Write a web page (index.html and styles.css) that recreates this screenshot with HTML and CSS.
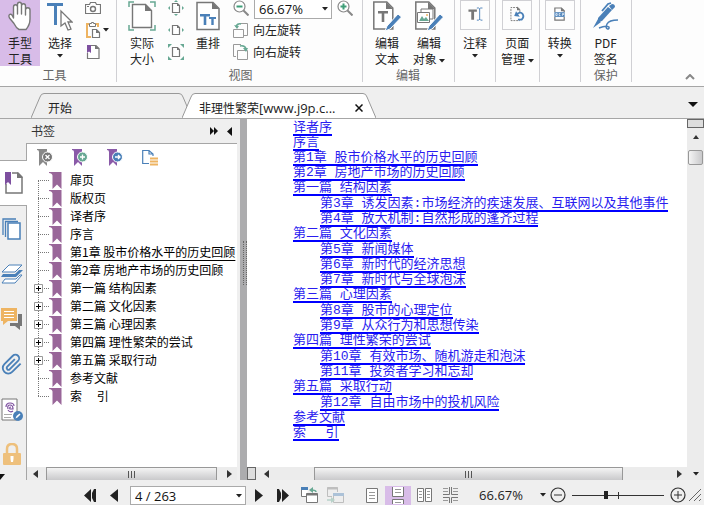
FILE: index.html
```
<!DOCTYPE html>
<html lang="zh-CN">
<head>
    <meta charset="UTF-8">
    <meta name="viewport" content="width=device-width, initial-scale=1.0">
    <title>非理性繁荣</title>
    <link rel="stylesheet" href="styles.css">
</head>
<body>
    <!-- Shared icons -->
    <svg class="sprite" aria-hidden="true">
        <symbol id="caret" viewBox="0 0 6 4"><path d="M0 0h6L3 3.6z" fill="#222"/></symbol>
        <symbol id="mark" viewBox="0 0 13 17"><path d="M0 0h12.5v17L8 12.5 3.5 17V3.5Q3 1 0 1z" fill="#996699"/></symbol>
        <symbol id="plus-box" viewBox="0 0 9 9"><path d="M.5.5h8v8h-8z" fill="#fff" stroke="#999"/><path d="M2 4.5h5M4.5 2v5" stroke="#000"/></symbol>
        <symbol id="arrow-left" viewBox="0 0 5 8"><path d="M5 0v8L0 4z" fill="#333"/></symbol>
        <symbol id="arrow-right" viewBox="0 0 5 8"><path d="M0 0v8l5-4z" fill="#333"/></symbol>
        <symbol id="small-page" viewBox="0 0 16 16"><path d="M4.5 3.5h5l2 2v7h-7z" fill="#fff" stroke="#777" stroke-width="1.2"/><path d="M9 3v3h3z" fill="#777"/></symbol>
    </svg>

    <header class="ribbon">
        <section class="group">
            <div class="group-items">
                <button class="big-btn hand active">
                    <svg width="24" height="34" viewBox="0 0 24 34"><path d="M5.500 18V7c0-3 4-3 4 0v7-9.500c0-3 4-3 4 0V14 6c0-3 4-3 4 0v9-5c0-3 4.500-3 4.500 0v9c0 4-1 7-4 10.500h-7c-3-1.500-4-4-5-6L1.500 18C0 15 2 13 4 15z" fill="#fff" stroke="#777" stroke-width="1.4" stroke-linejoin="round"/></svg>
                    <span>手型<br>工具</span>
                </button>
                <button class="big-btn">
                    <svg width="26" height="34" viewBox="0 0 26 34"><path d="M0 3h16v3h-6v19H7V6H0z" fill="#4a80b8"/><path d="M14 11v15l4-3 3 7 3-1-3-7h4z" fill="#fff" stroke="#777" stroke-width="1.3"/></svg>
                    <span>选择</span>
                    <svg class="caret"><use href="#caret"/></svg>
                </button>
                <div class="small-col">
                    <button class="icon-btn" aria-label="快照"><svg width="16" height="16" viewBox="0 0 16 16"><path d="M.5 4.5h4l1-2h5l1 2h4v9H.5z" fill="#fff" stroke="#777" stroke-width="1.2"/><circle cx="8" cy="9" r="2.5" fill="none" stroke="#777" stroke-width="1.4"/><path d="M2 6.5h2" stroke="#777"/></svg></button>
                    <button class="icon-btn" aria-label="剪贴板"><svg width="16" height="16" viewBox="0 0 16 16"><path d="M4 2H2v13h4M11 2h2v3" fill="none" stroke="#eeb462" stroke-width="2"/><path d="M4.5 1.5h2v-1h2v1h2v3h-6z" fill="#fff" stroke="#777"/><path d="M7.5 7.5h4l3 3v5h-7z" fill="#fff" stroke="#777" stroke-width="1.2"/><path d="M11 7v4h4z" fill="#777"/></svg><svg class="caret"><use href="#caret"/></svg></button>
                    <button class="icon-btn" aria-label="书签"><svg width="16" height="16" viewBox="0 0 16 16"><path d="M6 1.5h5l3 3v10H2.5V9" fill="#fff" stroke="#777" stroke-width="1.2"/><path d="M10 1v4h4.5z" fill="#777"/><path d="M2 1h4v8L4 7.5 2 9z" fill="#7d4f9f"/></svg></button>
                </div>
            </div>
            <h2>工具</h2>
        </section>

        <section class="group view">
            <div class="group-items">
                <button class="big-btn">
                    <svg width="28" height="34" viewBox="0 0 28 34"><path d="M1 7V2h5M22 2h5v5M27 25v5h-5M6 30H1v-5" fill="none" stroke="#67a893" stroke-width="1.5"/><path d="M4.5 4.5h13l6 6v17h-19z" fill="#fff" stroke="#777" stroke-width="1.4"/><path d="M17 4v7h7z" fill="#777"/></svg>
                    <span>实际<br>大小</span>
                </button>
                <div class="small-col">
                    <button class="icon-btn" aria-label="适合页面"><svg width="16" height="16" viewBox="0 0 16 16"><use href="#small-page"/><path d="M8 0l2 2H6zM8 16l2-2H6zM0 8l2-2v4zM16 8l-2-2v4z" fill="#67a893"/></svg></button>
                    <button class="icon-btn" aria-label="适合宽度"><svg width="16" height="16" viewBox="0 0 16 16"><use href="#small-page"/><path d="M0 8l2-2v4zM16 8l-2-2v4z" fill="#67a893"/></svg></button>
                    <button class="icon-btn" aria-label="适合视区"><svg width="16" height="16" viewBox="0 0 16 16"><use href="#small-page"/><path d="M0 0h4L0 4zM16 0v4l-4-4zM0 16v-4l4 4zM16 16h-4l4-4z" fill="#67a893"/></svg></button>
                </div>
                <button class="big-btn">
                    <svg width="24" height="34" viewBox="0 0 24 34"><path d="M1 2.5h16l6 6v21H1z" fill="#fff" stroke="#777" stroke-width="1.5"/><path d="M16 2v7h7z" fill="#777"/><path d="M4 14h10v2.5h-3.700V25H7.700v-8.500H4zM13 17h7v2h-2.300v6h-2.400v-6H13z" fill="#4a80b8"/></svg>
                    <span>重排</span>
                </button>
                <div class="small-col zoom-col">
                    <div class="zoom-row">
                        <button class="icon-btn" aria-label="缩小"><svg width="16" height="16" viewBox="0 0 16 16"><circle cx="6.5" cy="6.5" r="5.5" fill="#fff" stroke="#888" stroke-width="1.2"/><path d="M3.5 6.5h6" stroke="#3f9e78" stroke-width="2"/><path d="M10.5 10.5l5 5" stroke="#888" stroke-width="2"/></svg></button>
                        <label class="combo zoom-combo"><select aria-label="缩放"><option>66.67%</option></select><svg class="caret"><use href="#caret"/></svg></label>
                        <button class="icon-btn" aria-label="放大"><svg width="16" height="16" viewBox="0 0 16 16"><circle cx="6.5" cy="6.5" r="5.5" fill="#fff" stroke="#888" stroke-width="1.2"/><path d="M3.5 6.5h6M6.5 3.5v6" stroke="#3f9e78" stroke-width="2"/><path d="M10.5 10.5l5 5" stroke="#888" stroke-width="2"/></svg></button>
                    </div>
                    <button class="text-btn"><svg width="16" height="16" viewBox="0 0 16 16"><path d="M7 1.5h7.5v12H11M.5 7.5h10v8H.5z" fill="none" stroke="#999"/><path d="M3 5q1-4 5-3" fill="none" stroke="#67a893" stroke-width="1.5"/><path d="M1 3l3 4 2-3z" fill="#67a893"/></svg>向左旋转</button>
                    <button class="text-btn"><svg width="16" height="16" viewBox="0 0 16 16"><path d="M3 12.5H.5V.5H8M4.5 6.5h10v9h-10z" fill="none" stroke="#999"/><path d="M7 2q5-1 6 3" fill="none" stroke="#67a893" stroke-width="1.5"/><path d="M10 4l3 4 2-4z" fill="#67a893"/></svg>向右旋转</button>
                </div>
            </div>
            <h2>视图</h2>
        </section>

        <section class="group edit">
            <div class="group-items">
                <button class="big-btn">
                    <svg width="28" height="34" viewBox="0 0 28 34"><path d="M.8 2h13l6 6v21H.8z" fill="#fff" stroke="#777" stroke-width="1.5"/><path d="M13 2v7h7z" fill="#777"/><path d="M5 11h10v2.500h-3.700V22H8.700v-8.500H5z" fill="#777"/><path d="M12 31l2-5 11-12 3.500 3-11.500 12z" fill="#4a80b8" stroke="#fff"/></svg>
                    <span>编辑<br>文本</span>
                </button>
                <button class="big-btn">
                    <svg width="28" height="34" viewBox="0 0 28 34"><path d="M.8 2h13l6 6v21H.8z" fill="#fff" stroke="#777" stroke-width="1.5"/><path d="M13 2v7h7z" fill="#777"/><path d="M6 12V9h12v10h-3M2.5 12.500h12v10h-12z" fill="#fff" stroke="#777"/><path d="M4 21l3-5 2 3 2-2 3 4z" fill="#67a893"/><circle cx="12" cy="15" r="1" fill="#eeb462"/><path d="M12 31l2-5 11-12 3.500 3-11.500 12z" fill="#4a80b8" stroke="#fff"/></svg>
                    <span>编辑<br>对象 <svg class="caret"><use href="#caret"/></svg></span>
                </button>
            </div>
            <h2>编辑</h2>
        </section>

        <section class="group narrow">
            <button class="big-btn boxed">
                <svg width="30" height="30" viewBox="0 0 30 30"><path d="M8 9h9v2.5h-3V20h-3v-8.500H8z" fill="#777"/><path d="M17 7.5h2l1 1 1-1h2M17 20.5h2l1-1 1 1h2M20 8v12" fill="none" stroke="#4a80b8"/></svg>
                <span>注释</span>
                <svg class="caret"><use href="#caret"/></svg>
            </button>
        </section>
        <section class="group narrow">
            <button class="big-btn boxed">
                <svg width="30" height="30" viewBox="0 0 30 30"><path d="M18 12V9l-2-2H8.500v14H18" fill="none" stroke="#777" stroke-dasharray="2 1"/><path d="M15 6v4h4z" fill="#777"/><path d="M15 14q4-3 6 0t-1 6h-4" fill="none" stroke="#4a80b8" stroke-width="2"/><path d="M12 16l6 1-4-6z" fill="#4a80b8"/></svg>
                <span>页面<br>管理 <svg class="caret"><use href="#caret"/></svg></span>
            </button>
        </section>
        <section class="group narrow">
            <button class="big-btn boxed">
                <svg width="30" height="30" viewBox="0 0 30 30"><path d="M9.500 12V7.500h7l3 3V12M9.500 17v3.500h10V17" fill="none" stroke="#777" stroke-width="1.3"/><path d="M16 7v4h4z" fill="#777"/><path d="M9 12h11v5H9z" fill="#4a80b8"/><path d="M10.500 13.500h1.500v2h-1.500zM15.500 13.500h-1.500v2h1.500M17.500 16v-2.500h1.500v1h-1" fill="none" stroke="#fff" stroke-width=".8"/></svg>
                <span>转换</span>
                <svg class="caret"><use href="#caret"/></svg>
            </button>
        </section>
        <section class="group protect">
            <button class="big-btn">
                <svg width="26" height="34" viewBox="0 0 26 34"><path d="M5 18L15 7l4 3L9 21l-4 1z" fill="#4a80b8"/><path d="M16 6l3-2q3 0 3 3l-3 3zM5 19l-5 9 8-6z" fill="#4a80b8"/><path d="M9 11l6-7 3-1" fill="none" stroke="#4a80b8" stroke-width="1.8"/><path d="M6 27q7-3 10-1c1 3-5 3-2-3q2-4 11-4" transform="translate(0 1)" fill="none" stroke="#4a80b8" stroke-width="1.5"/></svg>
                <span>PDF<br>签名</span>
            </button>
            <h2>保护</h2>
        </section>
        <button class="collapse" aria-label="折叠功能区"><svg width="10" height="6" viewBox="0 0 10 6"><path d="M1 5l4-4 4 4" fill="none" stroke="#888" stroke-width="2"/></svg></button>
    </header>

    <nav class="tabs">
        <a class="tab" href="#start">
            <svg width="13" height="25" viewBox="0 0 13 25"><path d="M0 25L9 4Q10 .5 13 .5" fill="#efefef" stroke="#999"/></svg>
            <span class="tab-body">开始</span>
            <svg width="13" height="25" viewBox="0 0 13 25"><path d="M0 .5Q3 .5 4 4l9 21" fill="#efefef" stroke="#999"/></svg>
        </a>
        <div class="tab current">
            <svg width="13" height="25" viewBox="0 0 13 25"><path d="M0 25L9 4Q10 .5 13 .5V25" fill="#fff"/><path d="M0 25L9 4Q10 .5 13 .5" fill="none" stroke="#999"/></svg>
            <span class="tab-body"><a href="#doc">非理性繁荣<span class="latin">[www.j9p.c...</span></a>
                <button aria-label="关闭"><svg width="8" height="8" viewBox="0 0 8 8"><path d="M.5.5l7 7M7.5.5l-7 7" stroke="#111" stroke-width="1.5"/></svg></button></span>
            <svg width="13" height="25" viewBox="0 0 13 25"><path d="M0 25V.5Q3 .5 4 4l9 21" fill="#fff"/><path d="M0 .5Q3 .5 4 4l9 21" fill="none" stroke="#999"/></svg>
        </div>
        <button class="tab-list" aria-label="标签列表"><svg width="10" height="6" viewBox="0 0 10 6"><path d="M0 0h10L5 5z" fill="#111"/></svg></button>
    </nav>

    <main>
        <aside class="rail">
            <div class="rail-top"></div>
            <button class="rail-current" aria-label="书签面板"><svg width="18" height="22" viewBox="0 0 18 22"><path d="M7 1h6l4 4v16H1V12" fill="#fff" stroke="#777" stroke-width="1.5"/><path d="M12 0v6h6z" fill="#777"/><path d="M0 0h6v13l-3-3-3 3z" fill="#7d4f9f"/></svg></button>
            <div class="rail-rest">
                <button aria-label="页面"><svg width="20" height="22" viewBox="0 0 20 22"><path d="M1 17V1h13M3.5 19V3.5H16" fill="none" stroke="#4a80b8" stroke-width="1.3"/><path d="M6 5h12v16H6z" fill="#fff" stroke="#4a80b8" stroke-width="1.5"/></svg></button>
                <button aria-label="图层"><svg width="22" height="20" viewBox="0 0 22 20"><path d="M8 1h13l-7 7H1z" fill="#fff" stroke="#4a80b8"/><path d="M18 6h4l-7 7H0l2-3h12z" fill="#4a80b8"/><path d="M19 11h2l-7 8H1l3-4h11z" fill="#fff" stroke="#4a80b8"/></svg></button>
                <button aria-label="注释"><svg width="22" height="22" viewBox="0 0 22 22"><path d="M17 6h4v12h-2v4l-5-4H9v-3h8z" fill="#777"/><path d="M0 0h16v13H7l-5 4v-4H0z" fill="#eeb462"/><path d="M3 3.5h10M3 6.5h10M3 9.5h10" stroke="#fff"/></svg></button>
                <button aria-label="附件"><svg width="22" height="22" viewBox="0 0 24 24"><path d="M21.4 11l-9.200 9.200a6 6 0 0 1-8.500-8.500l9.200-9.200a4 4 0 0 1 5.700 5.700l-9.200 9.200a2 2 0 0 1-2.800-2.800l8.500-8.500" transform="translate(0 .5)" fill="none" stroke="#4a80b8" stroke-width="2"/></svg></button>
                <button aria-label="签名"><svg width="22" height="24" viewBox="0 0 22 24"><path d="M1 1h15v21H1z" fill="#fff" stroke="#777"/><path d="M5 9q0-4 4-4 4 0 4 3M7 11q-1-4 2-4t3 4H9q-1-2 1-2M7 12q2 3 5 1" fill="none" stroke="#7d4f9f" stroke-width="1.2"/><path d="M3 16.5h8M3 19.5h7" stroke="#aaa"/><circle cx="17" cy="18" r="5" fill="#4a80b8"/><path d="M14.500 20.500l1-2.500 3-2.500 1 1-3 3z" fill="#fff"/></svg></button>
                <button aria-label="安全"><svg width="18" height="22" viewBox="0 0 18 22"><path d="M4 11V6q0-5 5-5t5 5v5" fill="none" stroke="#eec07c" stroke-width="2.5"/><rect y="10" width="18" height="12" rx="1" fill="#eec07c"/><path d="M7.500 13h3v3l-.5 3H8l-.5-3z" fill="#fff"/></svg></button>
                <svg class="rail-more" width="5" height="6" viewBox="0 0 5 6"><path d="M0 0h5L0 6z" fill="#111"/></svg>
            </div>
        </aside>

        <section class="panel">
            <div class="panel-head">
                <h3>书签</h3>
                <button aria-label="展开"><svg width="8" height="8" viewBox="0 0 8 8"><path d="M0 0l4 4-4 4zM4 0l4 4-4 4z" fill="#111"/></svg></button>
                <button aria-label="收起"><svg width="5" height="9" viewBox="0 0 5 9"><path d="M5 0v9L0 4.5z" fill="#111"/></svg></button>
            </div>
            <div class="panel-body">
                <div class="panel-tools">
                    <button aria-label="删除书签"><svg width="16" height="17" viewBox="0 0 16 17"><path d="M0 0h10v17l-4-4-4 4V3q0-2-2-2z" fill="#888"/><circle cx="10.5" cy="8" r="5" fill="#777" stroke="#fff"/><path d="M8.5 6l4 4M12.5 6l-4 4" stroke="#fff" stroke-width="1.3"/></svg></button>
                    <button aria-label="新建书签"><svg width="16" height="17" viewBox="0 0 16 17"><path d="M0 0h10v17l-4-4-4 4V3q0-2-2-2z" fill="#8a5aa8"/><circle cx="10.5" cy="8" r="5" fill="#67a893" stroke="#fff"/><path d="M8 8h5M10.500 5.500v5" stroke="#fff" stroke-width="1.3"/></svg></button>
                    <button aria-label="转到书签"><svg width="16" height="17" viewBox="0 0 16 17"><path d="M0 0h10v17l-4-4-4 4V3q0-2-2-2z" fill="#8a5aa8"/><circle cx="10.5" cy="8" r="5" fill="#4a80b8" stroke="#fff"/><path d="M8 8h4.500M11 6l2 2-2 2" fill="none" stroke="#fff" stroke-width="1.3"/></svg></button>
                    <button aria-label="书签选项"><svg width="16" height="17" viewBox="0 0 16 17"><path d="M7 14.500H.7v-13H7l4 3.500v2M7 1v4h4" fill="none" stroke="#4a80b8" stroke-width="1.2"/><path d="M8 9.500h8M8 12.500h8M8 15.500h8" stroke="#eeb462" stroke-width="2"/></svg></button>
                </div>
                <ul class="tree">
                    <li><svg class="mark"><use href="#mark"/></svg><a href="#p1">扉页</a></li>
                    <li><svg class="mark"><use href="#mark"/></svg><a href="#p2">版权页</a></li>
                    <li><svg class="mark"><use href="#mark"/></svg><a href="#p3">译者序</a></li>
                    <li><svg class="mark"><use href="#mark"/></svg><a href="#p4">序言</a></li>
                    <li><svg class="mark"><use href="#mark"/></svg><a class="selected" href="#p5">第1章 股市价格水平的历史回顾</a></li>
                    <li><svg class="mark"><use href="#mark"/></svg><a href="#p6">第2章 房地产市场的历史回顾</a></li>
                    <li><button aria-label="展开第一篇"><svg><use href="#plus-box"/></svg></button><svg class="mark"><use href="#mark"/></svg><a href="#p7">第一篇 结构因素</a></li>
                    <li><button aria-label="展开第二篇"><svg><use href="#plus-box"/></svg></button><svg class="mark"><use href="#mark"/></svg><a href="#p8">第二篇 文化因素</a></li>
                    <li><button aria-label="展开第三篇"><svg><use href="#plus-box"/></svg></button><svg class="mark"><use href="#mark"/></svg><a href="#p9">第三篇 心理因素</a></li>
                    <li><button aria-label="展开第四篇"><svg><use href="#plus-box"/></svg></button><svg class="mark"><use href="#mark"/></svg><a href="#p10">第四篇 理性繁荣的尝试</a></li>
                    <li><button aria-label="展开第五篇"><svg><use href="#plus-box"/></svg></button><svg class="mark"><use href="#mark"/></svg><a href="#p11">第五篇 采取行动</a></li>
                    <li><svg class="mark"><use href="#mark"/></svg><a href="#p12">参考文献</a></li>
                    <li><svg class="mark"><use href="#mark"/></svg><a href="#p13">索&emsp;&nbsp;引</a></li>
                </ul>
                <div class="hscroll">
                    <svg width="5" height="8"><use href="#arrow-left"/></svg>
                    <div class="thumb"><i></i><i></i><i></i></div>
                    <svg width="5" height="8"><use href="#arrow-right"/></svg>
                </div>
            </div>
        </section>

        <div class="splitter"><i></i></div>

        <section class="document">
            <div class="page-col">
                <article class="page">
                    <ul class="toc">
                        <li><a href="#p3">译者序</a></li>
                        <li><a href="#p4">序言</a></li>
                        <li><a href="#p5">第1章 股市价格水平的历史回顾</a></li>
                        <li><a href="#p6">第2章 房地产市场的历史回顾</a></li>
                        <li><a href="#p7">第一篇 结构因素</a>
                            <ul>
                                <li><a href="#c3">第3章 诱发因素:市场经济的疾速发展、互联网以及其他事件</a></li>
                                <li><a href="#c4">第4章 放大机制:自然形成的蓬齐过程</a></li>
                            </ul>
                        </li>
                        <li><a href="#p8">第二篇 文化因素</a>
                            <ul>
                                <li><a href="#c5">第5章 新闻媒体</a></li>
                                <li><a href="#c6">第6章 新时代的经济思想</a></li>
                                <li><a href="#c7">第7章 新时代与全球泡沫</a></li>
                            </ul>
                        </li>
                        <li><a href="#p9">第三篇 心理因素</a>
                            <ul>
                                <li><a href="#c8">第8章 股市的心理定位</a></li>
                                <li><a href="#c9">第9章 从众行为和思想传染</a></li>
                            </ul>
                        </li>
                        <li><a href="#p10">第四篇 理性繁荣的尝试</a>
                            <ul>
                                <li><a href="#c10">第10章 有效市场、随机游走和泡沫</a></li>
                                <li><a href="#c11">第11章 投资者学习和忘却</a></li>
                            </ul>
                        </li>
                        <li><a href="#p11">第五篇 采取行动</a>
                            <ul>
                                <li><a href="#c12">第12章 自由市场中的投机风险</a></li>
                            </ul>
                        </li>
                        <li><a href="#p12">参考文献</a></li>
                        <li><a href="#p13">索&emsp;&ensp;引</a></li>
                    </ul>
                </article>
                <div class="hscroll doc-scroll">
                    <div class="split-box"></div>
                    <svg width="5" height="8"><use href="#arrow-left"/></svg>
                    <div class="thumb"><i></i><i></i><i></i></div>
                    <svg width="5" height="8"><use href="#arrow-right"/></svg>
                </div>
            </div>
            <div class="vscroll">
                <div class="split-box"></div>
                <svg width="6" height="4" viewBox="0 0 6 4"><path d="M0 4h6L3 0z" fill="#333"/></svg>
                <div class="thumb"></div>
                <svg class="down" width="6" height="4"><use href="#caret"/></svg>
            </div>
        </section>
    </main>

    <footer class="status">
        <div class="pager">
            <button aria-label="首页"><svg width="12" height="13" viewBox="0 0 12 13"><path d="M7 0v13L0 6.500zM12 0v13h-2L8 9V4l2-4z" fill="#222"/></svg></button>
            <button aria-label="上一页"><svg width="8" height="13" viewBox="0 0 8 13"><path d="M8 0v13L0 6.5z" fill="#222"/></svg></button>
            <label class="combo page-combo"><select aria-label="页码"><option>4 / 263</option></select><svg class="caret"><use href="#caret"/></svg></label>
            <button aria-label="下一页"><svg width="8" height="13" viewBox="0 0 8 13"><path d="M0 0v13l8-6.500z" fill="#222"/></svg></button>
            <button aria-label="末页"><svg width="12" height="13" viewBox="0 0 12 13"><path d="M5 0v13l7-6.500zM0 0v13h2l2-4V4L2 0z" fill="#222"/></svg></button>
        </div>
        <div class="history">
            <button aria-label="上一视图"><svg width="17" height="16" viewBox="0 0 17 16"><path d="M6 9.500H.5v-9H7M5.500 6.500h11v9h-11z" fill="#fff" stroke="#777"/><path d="M0 1.500h7" stroke="#4a80b8" stroke-width="3"/><path d="M5.500 7.500h11" stroke="#777" stroke-width="2"/><path d="M15 5q0-2-5-2" fill="none" stroke="#67a893" stroke-width="1.5"/><path d="M8 3l4-3v6z" fill="#67a893"/></svg></button>
            <button class="off" aria-label="下一视图"><svg width="17" height="16" viewBox="0 0 17 16"><path d="M5 9.500H.5v-9h10V5M6.500 6.500h10v9h-10z" fill="#eee" stroke="#777"/><path d="M0 1.500h11" stroke="#777" stroke-width="2"/><path d="M6 7.500h11" stroke="#4a80b8" stroke-width="3"/><path d="M0 13h5" stroke="#67a893" stroke-width="1.5"/><path d="M8 13l-4-3v6z" fill="#67a893"/></svg></button>
        </div>
        <div class="layouts">
            <button aria-label="单页"><svg width="12" height="15" viewBox="0 0 12 15"><path d="M.5.5h11v14H.5z" fill="#fff" stroke="#777"/><path d="M3 4.500h6M3 7.500h6M3 10.500h6" stroke="#999"/></svg></button>
            <button class="active" aria-label="连续"><svg width="12" height="17" viewBox="0 0 12 17"><path d="M.5 0v9.500h11V0M.5 17v-4.500h11V17" fill="#fff" stroke="#777"/><path d="M3 2.500h6M3 5.500h6M3 15.500h6" stroke="#999"/></svg></button>
            <button aria-label="双页"><svg width="15" height="14" viewBox="0 0 15 14"><path d="M.5.5h6v13h-6zM8.500.5h6v13h-6z" fill="#fff" stroke="#777"/><path d="M2 3.500h3M2 6.500h3M2 9.500h3M10 3.500h3M10 6.500h3M10 9.500h3" stroke="#999"/></svg></button>
            <button aria-label="双页连续"><svg width="15" height="16" viewBox="0 0 15 16"><path d="M6.500 0v7.500H0M8.500 0v7.500H15M0 10.500h6.500V16M15 10.500H8.500V16" fill="none" stroke="#777"/><path d="M0 1.500h5M0 4.500h5M10 1.500h5M10 4.500h5M0 13.500h5M10 13.500h5" stroke="#999"/></svg></button>
        </div>
        <button class="zoom-label">66.67%<svg class="caret"><use href="#caret"/></svg></button>
        <div class="zoom">
            <button aria-label="缩小"><svg width="16" height="16" viewBox="0 0 16 16"><circle cx="8" cy="8" r="7" fill="none" stroke="#333" stroke-width="1.2"/><path d="M4 8h8" stroke="#333"/></svg></button>
            <div class="slider"><input type="range" min="0" max="100" value="36" aria-label="缩放比例"><i></i></div>
            <button aria-label="放大"><svg width="16" height="16" viewBox="0 0 16 16"><circle cx="8" cy="8" r="7" fill="none" stroke="#333" stroke-width="1.2"/><path d="M4 8h8M8 4v8" stroke="#333"/></svg></button>
        </div>
        <svg class="grip" width="13" height="13" viewBox="0 0 13 13"><path d="M0 12L12 0M5 12l7-7M10 12l2-2" stroke="#666"/></svg>
    </footer>
</body>
</html>
```
FILE: styles.css
```
:root {
    --bar: #efefef;
    --line: #a6a6a6;
    --divider: #d0d0d4;
    --active: #d8bce8;
    --text: #222;
    --link: #2a1cf0;
}

* {
    box-sizing: border-box;
    margin: 0;
    padding: 0;
}

body {
    height: 100vh;
    display: flex;
    flex-direction: column;
    overflow: hidden;
    background: var(--bar);
    color: var(--text);
    font: 12px/16px "Noto Sans CJK SC", sans-serif;
}

button,
select {
    border: 0;
    background: none;
    color: inherit;
    font: inherit;
}

a {
    color: inherit;
    text-decoration: none;
}

ul {
    list-style: none;
}

svg {
    display: block;
    flex: none;
}

.sprite {
    position: absolute;
    width: 0;
    height: 0;
}

.caret {
    width: 6px;
    height: 4px;
}

/* Ribbon */
.ribbon {
    display: flex;
    flex: none;
    height: 87px;
    padding-bottom: 4px;
    background: #fdfdfd;
    border-bottom: 1px solid var(--line);
}

.group {
    display: flex;
    flex-direction: column;
    justify-content: space-between;
    padding-right: 7px;
    border-right: 1px solid var(--divider);
}

.group-items {
    display: flex;
}

.group h2 {
    color: #666;
    font-size: 12px;
    font-weight: normal;
    line-height: 14px;
    text-align: center;
}

.big-btn {
    display: flex;
    flex-direction: column;
    align-items: center;
    min-width: 40px;
    height: 66px;
    white-space: nowrap;
}

.big-btn > svg:first-child {
    margin-bottom: 1px;
}

.big-btn > .caret {
    margin-top: 3px;
}

.big-btn span .caret {
    display: inline-block;
    vertical-align: middle;
}

.active {
    background: var(--active);
}

.small-col {
    display: flex;
    flex-direction: column;
    gap: 6px;
    padding-left: 5px;
}

.icon-btn,
.text-btn {
    display: flex;
    align-items: center;
    gap: 2px;
    height: 16px;
}

.text-btn {
    gap: 4px;
}

.view {
    padding: 0 9px 0 11px;
}

.view .big-btn {
    min-width: 24px;
}

.view .small-col {
    padding: 0 12px;
}

.view .zoom-col {
    padding: 0 0 0 13px;
}

.zoom-row {
    display: flex;
    gap: 5px;
    height: 16px;
}

.combo {
    position: relative;
    display: block;
}

.combo select {
    width: 100%;
    height: 100%;
    padding-left: 4px;
    appearance: none;
    background: #fff;
    border: 1px solid #aaa;
    color: #111;
    font: 13px "Open Sans", sans-serif;
}

.combo .caret {
    position: absolute;
    top: 8px;
    right: 4px;
}

.zoom-combo {
    width: 78px;
    height: 20px;
    margin-top: -1px;
}

.edit {
    padding: 0 5px 0 4px;
}

.edit .group-items {
    gap: 2px;
}

.narrow {
    padding: 0 5px;
}

.narrow .big-btn {
    min-width: 29px;
}

.boxed > svg:first-child {
    margin-bottom: 5px;
    border: 1px solid var(--divider);
}

.protect {
    padding: 0 5px;
}

.collapse {
    align-self: flex-end;
    margin-left: auto;
    padding: 0 9px 2px;
}

/* Document tabs */
.tabs {
    display: flex;
    align-items: flex-end;
    flex: none;
    height: 32px;
    padding-left: 31px;
    border-bottom: 1px solid var(--line);
}

.tab {
    display: flex;
    height: 25px;
}

.tab-body {
    display: flex;
    align-items: center;
    justify-content: space-between;
    width: 135px;
    padding: 4px 0 0 4px;
    border-top: 1px solid #999;
}

.current {
    margin-left: -10px;
}

.current .tab-body {
    width: 168px;
    background: #fff;
}

.latin {
    font-family: "Open Sans", sans-serif;
    font-size: 13px;
}

.tab-list {
    margin-left: auto;
    padding: 0 6px 10px;
}

/* Left rail */
main {
    display: flex;
    flex: 1;
    min-height: 0;
}

.rail {
    display: flex;
    flex-direction: column;
    flex: none;
    width: 27px;
    padding-top: 24px;
    background: var(--bar);
}

.rail-top {
    flex: none;
    height: 18px;
    border-right: 1px solid var(--line);
    border-bottom: 1px solid var(--line);
}

.rail-current {
    display: grid;
    place-items: center;
    flex: none;
    height: 44px;
    background: #fff;
}

.rail-rest {
    position: relative;
    display: flex;
    flex: 1;
    flex-direction: column;
    gap: 23px;
    padding: 12px 2px 0 0;
    border-top: 1px solid var(--line);
    border-right: 1px solid var(--line);
}

.rail-rest button {
    display: grid;
    place-items: center;
    height: 22px;
}

.rail-more {
    position: absolute;
    bottom: 0;
    left: 0;
}

/* Bookmark panel */
.panel {
    display: flex;
    flex-direction: column;
    flex: none;
    width: 213px;
    padding-right: 3px;
}

.panel-head {
    display: flex;
    align-items: center;
    gap: 9px;
    height: 25px;
    padding: 0 5px 0 4px;
    border-bottom: 1px solid var(--line);
}

.panel-head h3 {
    margin-right: auto;
    color: #333;
    font-size: 12px;
    font-weight: normal;
}

.panel-body {
    display: flex;
    flex: 1;
    flex-direction: column;
    background: #fff;
}

.panel-tools {
    display: flex;
    gap: 19px;
    padding: 5px 10px;
}

.tree {
    flex: 1;
    color: #000;
}

.tree li {
    position: relative;
    display: flex;
    align-items: center;
    gap: 8px;
    height: 18px;
    padding-left: 22px;
    white-space: nowrap;
}

.tree li::before {
    content: '';
    position: absolute;
    top: 9px;
    left: 11px;
    width: 11px;
    border-top: 1px dotted #777;
}

.tree li + li::after {
    content: '';
    position: absolute;
    top: -9px;
    left: 11px;
    height: 18px;
    border-left: 1px dotted #777;
}

.tree .mark {
    width: 13px;
    height: 17px;
}

.tree button {
    position: absolute;
    z-index: 1;
    top: 5px;
    left: 7px;
    width: 9px;
    height: 9px;
}

.tree button svg {
    width: 9px;
    height: 9px;
}

.tree .selected {
    text-decoration: underline;
    text-underline-offset: 3px;
    text-decoration-skip-ink: none;
}

.hscroll {
    display: flex;
    align-items: center;
    flex: none;
    gap: 8px;
    height: 13px;
    padding: 0 5px 0 6px;
    background: #ececec;
}

.thumb {
    display: flex;
    align-items: center;
    justify-content: center;
    gap: 2px;
    background: linear-gradient(#f4f4f4, #c9c9cb);
    border: 1px solid #989898;
}

.hscroll .thumb {
    flex: 1;
    height: 13px;
    margin-right: 2px;
    border-bottom: 0;
}

.thumb i {
    width: 1px;
    height: 7px;
    background: #555;
}

.splitter {
    display: flex;
    justify-content: flex-end;
    flex: none;
    width: 7px;
    padding-top: 122px;
    background: #acacae;
}

.splitter i {
    width: 4px;
    height: 44px;
    border: 1px dotted #666;
    border-width: 0 1px;
}

/* Page view */
.document {
    display: flex;
    flex: 1;
    min-width: 0;
}

.page-col {
    display: flex;
    flex: 1;
    flex-direction: column;
    min-width: 0;
}

.page {
    flex: 1;
    min-height: 0;
    background: #fff;
    overflow: hidden;
}

.toc {
    padding: 2px 0 0 46px;
    color: var(--link);
    font: 13px/15px "Liberation Mono", "Noto Sans CJK SC", monospace;
    white-space: nowrap;
}

.toc a {
    display: inline-block;
    height: 15px;
    border-bottom: 2px solid #00f;
    line-height: 13px;
    vertical-align: top;
}

.toc ul {
    padding: 1px 0 0 27px;
}

.doc-scroll {
    padding-left: 0;
}

.split-box {
    flex: none;
    width: 9px;
    height: 13px;
    background: #ddd;
    border: 1px solid #666;
}

.doc-scroll .thumb {
    margin: 0 46px 0 37px;
}

.vscroll {
    display: flex;
    flex-direction: column;
    align-items: center;
    flex: none;
    width: 17px;
    background: #ececec;
}

.vscroll .split-box {
    width: 17px;
    height: 9px;
    margin-bottom: 7px;
}

.vscroll .thumb {
    width: 15px;
    height: 15px;
    margin-top: 11px;
    background: linear-gradient(90deg, #f4f4f4, #c9c9cb);
    border-radius: 2px;
}

.down {
    margin: auto 0 4px;
}

/* Status bar */
.status {
    display: flex;
    align-items: center;
    flex: none;
    height: 25px;
    padding: 5px 2px 0 84px;
}

.pager,
.history,
.layouts,
.zoom {
    display: flex;
    align-items: center;
}

.pager {
    gap: 14px;
}

.page-combo {
    width: 116px;
    height: 19px;
    margin: 0 -5px 0 -2px;
}

.history {
    gap: 9px;
    margin-left: 12px;
}

.off {
    opacity: .4;
}

.layouts {
    margin-left: 15px;
}

.layouts button {
    display: grid;
    place-items: center;
    width: 26px;
    height: 19px;
}

.zoom-label {
    display: flex;
    align-items: center;
    gap: 17px;
    margin-left: auto;
    font: 13px "Open Sans", sans-serif;
}

.zoom {
    gap: 6px;
    margin-left: 4px;
}

.slider {
    position: relative;
    width: 92px;
    height: 16px;
}

.slider input {
    display: block;
    width: 100%;
    height: 16px;
    appearance: none;
    background: linear-gradient(#333, #333) center / 100% 1px no-repeat;
}

.slider input::-webkit-slider-thumb {
    appearance: none;
    width: 4px;
    height: 8px;
    background: #222;
}

.slider i {
    position: absolute;
    top: 5px;
    left: 50%;
    width: 1px;
    height: 7px;
    background: #333;
}

.grip {
    margin-left: 3px;
}
```
